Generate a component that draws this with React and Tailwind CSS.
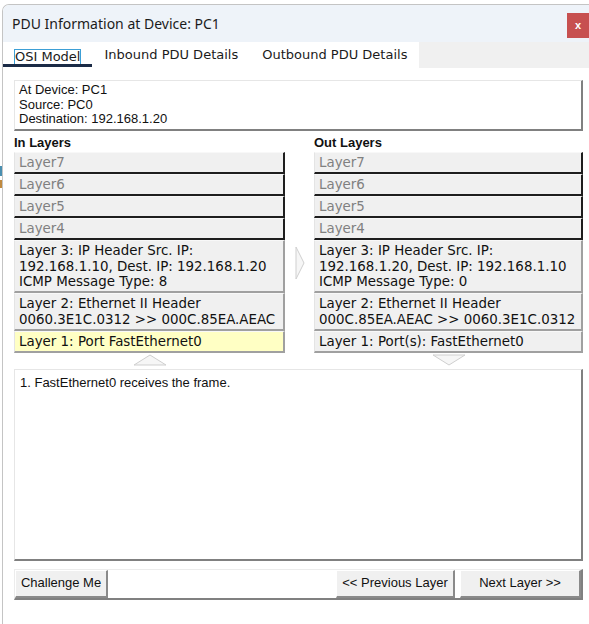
import React from "react";

const sans = { fontFamily: '"Liberation Sans", Arial, sans-serif' };
const tahoma = { fontFamily: '"DejaVu Sans", Verdana, sans-serif' };

const inLayers = [
    { text: ["Layer7"], off: true },
    { text: ["Layer6"], off: true },
    { text: ["Layer5"], off: true },
    { text: ["Layer4"], off: true },
    { text: ["Layer 3: IP Header Src. IP:", "192.168.1.10, Dest. IP: 192.168.1.20", "ICMP Message Type: 8"] },
    { text: ["Layer 2: Ethernet II Header", "0060.3E1C.0312 >> 000C.85EA.AEAC"] },
    { text: ["Layer 1: Port FastEthernet0"], hl: true },
];

const outLayers = [
    { text: ["Layer7"], off: true },
    { text: ["Layer6"], off: true },
    { text: ["Layer5"], off: true },
    { text: ["Layer4"], off: true },
    { text: ["Layer 3: IP Header Src. IP:", "192.168.1.20, Dest. IP: 192.168.1.10", "ICMP Message Type: 0"] },
    { text: ["Layer 2: Ethernet II Header", "000C.85EA.AEAC >> 0060.3E1C.0312"] },
    { text: ["Layer 1: Port(s): FastEthernet0"] },
];

function LayerRow({ layer }) {
    const edge = layer.off
        ? "border-r-[#1e1e1e] border-b-[#1e1e1e]"
        : "border-r-[#a0a0a0] border-b-[#a0a0a0]";
    const bg = layer.hl ? "bg-[#ffffc4]" : "bg-[#f0f0f0]";
    const color = layer.off ? "text-[#808080]" : "text-[#111]";
    return (
        <div
            className={`border-t border-l border-t-[#f8f8f8] border-l-[#e4e4e4] border-r-2 border-b-2 ${edge} ${bg} ${color} px-[4px] pt-[2px] pb-[1.5px] text-[13.4px] leading-[15.5px] whitespace-nowrap`}
            style={tahoma}
        >
            {layer.text.map((t) => (
                <div key={t}>{t}</div>
            ))}
        </div>
    );
}

function LayerColumn({ title, layers, width, down }) {
    return (
        <div className={`flex flex-col ${width}`}>
            <div className="mt-[4px] mb-[1px] text-[13px] leading-[16px] font-bold text-[#111]" style={sans}>
                {title}
            </div>
            <div className="flex flex-col">
                {layers.map((l, i) => (
                    <LayerRow key={i} layer={l} />
                ))}
            </div>
            <div className="flex justify-center h-[13px] pt-[1px]">
                <svg width="34" height="12" viewBox="0 0 34 12">
                    <polygon
                        points={down ? "1,1 33,1 17,11" : "1,11 17,1 33,11"}
                        fill="#f6f6f6"
                        stroke="#cfcfcf"
                        strokeWidth="1"
                    />
                </svg>
            </div>
        </div>
    );
}

function Button({ children, width }) {
    return (
        <button
            className={`${width} h-[28px] bg-[#f0f0f0] border-t border-l border-t-white border-l-white border-r-2 border-b-2 border-r-[#8a8a8a] border-b-[#8a8a8a] text-[13px] text-[#111] whitespace-nowrap`}
            style={sans}
        >
            {children}
        </button>
    );
}

export default function App() {
    return (
        <div className="w-[589px] h-[624px] bg-white flex overflow-hidden">
            <div className="w-[2px] flex flex-col">
                <div className="mt-[166px] h-[10px] bg-[#4a8fb0]" />
                <div className="mt-[4px] h-[8px] bg-[#c08a40]" />
            </div>
            <div className="flex-1 mt-[4px] border-l border-t border-[#c4c4c4] rounded-tl-[7px] flex flex-col overflow-hidden">
                {/* title bar */}
                <div className="h-[37px] bg-[#eef3f9] flex items-start justify-between">
                    <div
                        className="pl-[9px] h-full flex items-center text-[14px] text-[#1b1b1b]"
                        style={{ fontFamily: '"Noto Sans", "Open Sans", sans-serif' }}
                    >
                        PDU Information at Device: PC1
                    </div>
                    <div
                        className="mt-[8px] w-[22px] h-[25px] bg-[#c75050] flex items-center justify-center text-white font-bold text-[11px]"
                        style={sans}
                    >
                        x
                    </div>
                </div>

                {/* tabs */}
                <div className="h-[26px] flex text-[13px] text-[#1b1b1b] whitespace-nowrap" style={tahoma}>
                    <div className="w-[416px] flex bg-white">
                        <div className="relative px-[11px] pt-[5px]">
                            <span className="inline-block border border-[#3c9fd6] leading-[14px]">OSI Model</span>
                            <div className="absolute left-0 right-0 bottom-[1px] h-[3px] bg-[#1b2b46]" />
                        </div>
                        <div className="px-[12px] pt-[6px] leading-[14px]">Inbound PDU Details</div>
                        <div className="px-[12px] pt-[6px] leading-[14px]">Outbound PDU Details</div>
                    </div>
                    <div className="flex-1 bg-[#f0f0f0]" />
                </div>

                {/* body */}
                <div className="flex-1 bg-white pl-[11px] pr-[6px] pt-[12px] flex flex-col">
                    <div
                        className="h-[51px] border-t border-l border-t-[#e6e6e6] border-l-[#e6e6e6] border-r-2 border-b-2 border-r-[#808080] border-b-[#808080] px-[4px] pt-[2px] text-[13px] leading-[14.5px] text-[#111]"
                        style={sans}
                    >
                        <div>At Device: PC1</div>
                        <div>Source: PC0</div>
                        <div>Destination: 192.168.1.20</div>
                    </div>

                    <div className="flex">
                        <LayerColumn title="In Layers" layers={inLayers} width="w-[271px]" />
                        <div className="w-[29px] pl-[10px] pt-[115px]">
                            <svg width="10" height="34" viewBox="0 0 10 34">
                                <polygon points="1,1 9,17 1,33" fill="#f6f6f6" stroke="#cfcfcf" strokeWidth="1" />
                            </svg>
                        </div>
                        <LayerColumn title="Out Layers" layers={outLayers} width="w-[269px]" down />
                    </div>

                    <div
                        className="mt-[3px] h-[192px] border-t border-l border-t-[#e6e6e6] border-l-[#e6e6e6] border-r-2 border-b-2 border-r-[#808080] border-b-[#808080] px-[5px] pt-[6px] text-[13px] leading-[14px] text-[#111]"
                        style={sans}
                    >
                        1. FastEthernet0 receives the frame.
                    </div>

                    <div className="mt-[8px] flex items-start border-t border-l border-t-[#ececec] border-l-[#ececec] border-r-2 border-b-2 border-r-[#808080] border-b-[#808080]">
                        <Button width="w-[93px]">Challenge Me</Button>
                        <div className="flex-1" />
                        <Button width="w-[119px]">&lt;&lt; Previous Layer</Button>
                        <div className="w-[5px]" />
                        <Button width="w-[121px]">Next Layer &gt;&gt;</Button>
                    </div>
                </div>
            </div>
        </div>
    );
}
